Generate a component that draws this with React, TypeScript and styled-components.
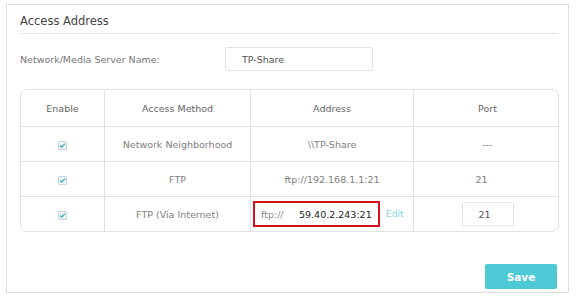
import styled, { createGlobalStyle } from 'styled-components';

const GlobalStyle = createGlobalStyle`
  html, body {
    margin: 0;
    padding: 0;
    background: #ffffff;
  }
  body {
    font-family: "DejaVu Sans", Verdana, sans-serif;
  }
`;

const Panel = styled.section`
  box-sizing: border-box;
  margin: 4px 0 0 6px;
  width: 563px;
  height: 289px;
  border: 1px solid #dedede;
  padding: 0 10px 0 13px;
  display: flex;
  flex-direction: column;
`;

const Title = styled.h2`
  margin: 0;
  height: 29px;
  padding-top: 4px;
  box-sizing: border-box;
  display: flex;
  align-items: center;
  border-bottom: 1px solid #e6e6e6;
  font-size: 11.5px;
  font-weight: normal;
  color: #444;
`;

const FieldRow = styled.div`
  display: flex;
  align-items: center;
  margin-top: 13px;
  height: 24px;
`;

const Label = styled.span`
  width: 205px;
  font-size: 9.5px;
  color: #777;
`;

const TextInput = styled.div<{ $w: number }>`
  box-sizing: border-box;
  width: ${(p) => p.$w}px;
  height: 24px;
  border: 1px solid #e4e4e4;
  border-radius: 2px;
  padding-left: 16px;
  display: flex;
  align-items: center;
  font-size: 9.5px;
  color: #555;
  background: #fff;
`;

const TableWrap = styled.div`
  margin-top: 18px;
  width: 537px;
  border: 1px solid #e2e2e2;
  border-radius: 7px;
  overflow: hidden;
`;

const Table = styled.table`
  width: 100%;
  border-collapse: collapse;
  table-layout: fixed;
`;

const Th = styled.th<{ $w: number }>`
  width: ${(p) => p.$w}px;
  height: 36px;
  font-size: 9.5px;
  font-weight: normal;
  color: #666;
  border-left: 1px solid #e2e2e2;
  text-align: center;
  padding: 0;
  &:first-child { border-left: none; }
`;

const Td = styled.td<{ $align?: string }>`
  height: 34px;
  font-size: 9.5px;
  color: #808080;
  border-left: 1px solid #e2e2e2;
  border-top: 1px solid #e2e2e2;
  text-align: ${(p) => p.$align || 'center'};
  padding: 0;
  &:first-child { border-left: none; }
`;

const PortText = styled.span`
  display: inline-block;
  margin-right: 12px;
`;

const Check = styled.span`
  display: inline-flex;
  box-sizing: border-box;
  width: 9px;
  height: 9px;
  border: 1px solid #c8d6dc;
  background: #eef6f8;
  border-radius: 1px;
  align-items: center;
  justify-content: center;
  vertical-align: middle;
`;

const AddressCell = styled.div`
  display: flex;
  align-items: center;
  padding-left: 2px;
`;

const AddressBox = styled.div`
  box-sizing: border-box;
  width: 127px;
  height: 26px;
  border: 2px solid #d3111d;
  display: flex;
  align-items: center;
  padding-left: 6px;
`;

const Prefix = styled.span`
  font-size: 9.5px;
  color: #888;
  width: 38px;
`;

const Value = styled.span`
  font-size: 9.5px;
  color: #222;
`;

const EditLink = styled.span`
  margin-left: 6px;
  font-size: 9px;
  color: #7fd3de;
`;

const Footer = styled.div`
  margin-top: auto;
  margin-bottom: 3px;
  display: flex;
  justify-content: flex-end;
  width: 537px;
`;

const SaveButton = styled.button`
  width: 72px;
  height: 25px;
  border: none;
  border-radius: 2px;
  background: #4ec9d6;
  color: #fff;
  font-family: "DejaVu Sans", Verdana, sans-serif;
  font-weight: bold;
  font-size: 10.5px;
  padding: 0;
`;

function CheckBox() {
  return (
    <Check>
      <svg width="7" height="7" viewBox="0 0 7 7">
        <path d="M1 3.6 L2.8 5.2 L6 1.6" fill="none" stroke="#3aa9bb" strokeWidth="1.3" />
      </svg>
    </Check>
  );
}

export default function App() {
  return (
    <>
      <GlobalStyle />
      <Panel>
        <Title>Access Address</Title>
        <FieldRow>
          <Label>Network/Media Server Name:</Label>
          <TextInput $w={148}>TP-Share</TextInput>
        </FieldRow>
        <TableWrap>
          <Table>
            <thead>
              <tr>
                <Th $w={83}>Enable</Th>
                <Th $w={145}>Access Method</Th>
                <Th $w={162}>Address</Th>
                <Th $w={147}>Port</Th>
              </tr>
            </thead>
            <tbody>
              <tr>
                <Td><CheckBox /></Td>
                <Td>Network Neighborhood</Td>
                <Td>\\TP-Share</Td>
                <Td>---</Td>
              </tr>
              <tr>
                <Td><CheckBox /></Td>
                <Td>FTP</Td>
                <Td>ftp://192.168.1.1:21</Td>
                <Td><PortText>21</PortText></Td>
              </tr>
              <tr>
                <Td><CheckBox /></Td>
                <Td>FTP (Via Internet)</Td>
                <Td $align="left">
                  <AddressCell>
                    <AddressBox>
                      <Prefix>ftp://</Prefix>
                      <Value>59.40.2.243:21</Value>
                    </AddressBox>
                    <EditLink>Edit</EditLink>
                  </AddressCell>
                </Td>
                <Td>
                  <TextInput $w={52} style={{ margin: '0 auto' }}>21</TextInput>
                </Td>
              </tr>
            </tbody>
          </Table>
        </TableWrap>
        <Footer>
          <SaveButton>Save</SaveButton>
        </Footer>
      </Panel>
    </>
  );
}
